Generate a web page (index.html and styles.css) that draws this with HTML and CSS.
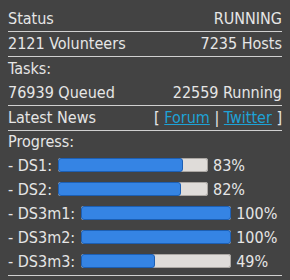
FILE: index.html
```html
<!DOCTYPE html>
<html>
<head>
<meta charset="utf-8">
<link rel="stylesheet" href="styles.css">
</head>
<body>
<div class="panel">
  <div class="row line"><span>Status</span><span>RUNNING</span></div>
  <div class="row line"><span>2121 Volunteers</span><span>7235 Hosts</span></div>
  <div class="row"><span>Tasks:</span></div>
  <div class="row line"><span>76939 Queued</span><span>22559 Running</span></div>
  <div class="row line"><span>Latest News</span><span class="news">[ <a href="#">Forum</a> | <a href="#">Twitter</a> ]</span></div>
  <div class="row progress-title"><span>Progress:</span></div>
  <div class="progress">
    <div class="prow"><span>- DS1:</span><div class="bar"><div class="fill" style="width:83%"></div></div><span>83%</span></div>
    <div class="prow"><span>- DS2:</span><div class="bar"><div class="fill" style="width:82%"></div></div><span>82%</span></div>
    <div class="prow"><span>- DS3m1:</span><div class="bar"><div class="fill" style="width:100%"></div></div><span>100%</span></div>
    <div class="prow"><span>- DS3m2:</span><div class="bar"><div class="fill" style="width:100%"></div></div><span>100%</span></div>
    <div class="prow"><span>- DS3m3:</span><div class="bar"><div class="fill" style="width:49%"></div></div><span>49%</span></div>
  </div>
</div>
</body>
</html>
```
FILE: styles.css
```css
html, body {
  margin: 0;
  padding: 0;
  background: #434343;
}
body {
  font-family: "DejaVu Sans Condensed", "DejaVu Sans", sans-serif;
  font-size: 16px;
  color: #e6e6e6;
}
.panel {
  padding: 7px 8px 0 8px;
}
.row {
  display: flex;
  justify-content: space-between;
  line-height: 24px;
  height: 24px;
}
.row.line {
  border-bottom: 1px solid #d0d0d0;
}
.progress-title {
  height: 22px;
  line-height: 22px;
}
.news a {
  color: #1ea2d6;
  text-decoration: underline;
}
.progress {
  border-bottom: 1px solid #d0d0d0;
  padding-bottom: 2px;
}
.prow {
  display: flex;
  align-items: center;
  gap: 5px;
  height: 24px;
}
.bar {
  width: 150px;
  height: 14px;
  background: #dfdcd9;
  box-shadow: inset 0 0 0 1px #aba7a3;
  border-radius: 3px;
  position: relative;
  margin-left: 1px;
}
.fill {
  position: absolute;
  left: 0;
  top: 0;
  bottom: 0;
  box-sizing: border-box;
  background: #3584e4;
  border: 1px solid #1c5fb4;
  border-radius: 3px;
}
```
